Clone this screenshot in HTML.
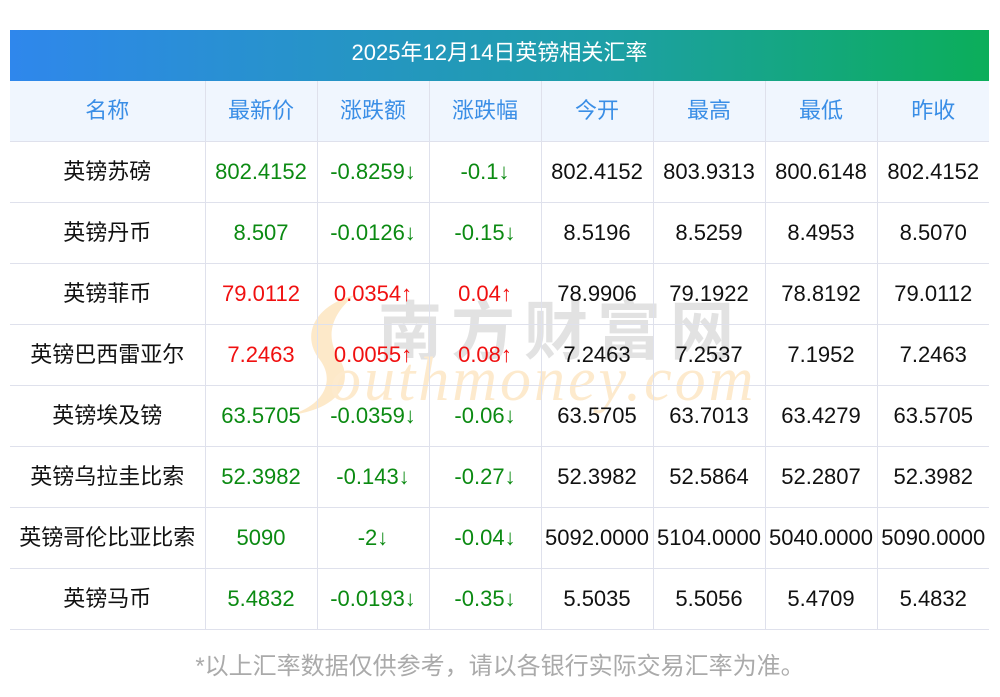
<!DOCTYPE html>
<html><head><meta charset="utf-8"><style>
body{margin:0;width:1000px;height:697px;background:#fff;font-family:"Liberation Sans","Noto Sans CJK SC",sans-serif;position:relative;overflow:hidden}
.title{position:absolute;left:10px;top:30px;width:979px;height:51px;background:linear-gradient(90deg,#2f87ec,#1e9fa8 60%,#0bae5a);color:#fff;font-size:22px;line-height:46px;text-align:center}
table{position:absolute;left:10px;top:81px;border-collapse:collapse;width:979px;table-layout:fixed}
td,th{height:60px;border:1px solid #dfe1ec;text-align:center;font-size:22px;font-weight:normal;padding:0;white-space:nowrap;color:#111}
tr:first-child td,tr:first-child th{border-top:none}
td:first-child,th:first-child{border-left:none;padding-bottom:5px;height:55px}
td:last-child,th:last-child{border-right:none}
th{background:#f0f6fe;color:#3a8ee6;padding-bottom:5px!important;height:55px!important}
.g{color:#0b8a12}.r{color:#f01010}
.wm{position:absolute;pointer-events:none}
.foot{position:absolute;top:646px;left:0;width:1000px;text-align:center;color:#aaa;font-size:24px}
</style></head><body>
<div class="title">2025年12月14日英镑相关汇率</div>
<svg class="wm" style="left:280px;top:290px" width="100" height="130"><path d="M75 5 C35 15 20 45 40 70 C55 90 45 115 10 125 C55 120 75 95 60 70 C45 48 50 25 75 5Z" fill="#fde9c9"/></svg>
<div class="wm" style="left:378px;top:292px;font-size:64px;font-weight:bold;color:#e2e2e2;letter-spacing:9px;font-family:'Noto Sans CJK SC',sans-serif;line-height:70px">南方财富网</div>
<div class="wm" style="left:330px;top:345px;font-size:62px;font-style:italic;color:#fdeacd;font-family:'Liberation Serif',serif;letter-spacing:3px;line-height:70px">outhmoney.com</div>
<table>
<colgroup><col style="width:195px"><col style="width:112px"><col style="width:112px"><col style="width:112px"><col style="width:112px"><col style="width:112px"><col style="width:112px"><col style="width:112px"></colgroup>
<tr><th>名称</th><th>最新价</th><th>涨跌额</th><th>涨跌幅</th><th>今开</th><th>最高</th><th>最低</th><th>昨收</th></tr>
<tr><td>英镑苏磅</td><td class="g">802.4152</td><td class="g">-0.8259↓</td><td class="g">-0.1↓</td><td>802.4152</td><td>803.9313</td><td>800.6148</td><td>802.4152</td></tr>
<tr><td>英镑丹币</td><td class="g">8.507</td><td class="g">-0.0126↓</td><td class="g">-0.15↓</td><td>8.5196</td><td>8.5259</td><td>8.4953</td><td>8.5070</td></tr>
<tr><td>英镑菲币</td><td class="r">79.0112</td><td class="r">0.0354↑</td><td class="r">0.04↑</td><td>78.9906</td><td>79.1922</td><td>78.8192</td><td>79.0112</td></tr>
<tr><td>英镑巴西雷亚尔</td><td class="r">7.2463</td><td class="r">0.0055↑</td><td class="r">0.08↑</td><td>7.2463</td><td>7.2537</td><td>7.1952</td><td>7.2463</td></tr>
<tr><td>英镑埃及镑</td><td class="g">63.5705</td><td class="g">-0.0359↓</td><td class="g">-0.06↓</td><td>63.5705</td><td>63.7013</td><td>63.4279</td><td>63.5705</td></tr>
<tr><td>英镑乌拉圭比索</td><td class="g">52.3982</td><td class="g">-0.143↓</td><td class="g">-0.27↓</td><td>52.3982</td><td>52.5864</td><td>52.2807</td><td>52.3982</td></tr>
<tr><td>英镑哥伦比亚比索</td><td class="g">5090</td><td class="g">-2↓</td><td class="g">-0.04↓</td><td>5092.0000</td><td>5104.0000</td><td>5040.0000</td><td>5090.0000</td></tr>
<tr><td>英镑马币</td><td class="g">5.4832</td><td class="g">-0.0193↓</td><td class="g">-0.35↓</td><td>5.5035</td><td>5.5056</td><td>5.4709</td><td>5.4832</td></tr>
</table>
<div class="foot">*以上汇率数据仅供参考，请以各银行实际交易汇率为准。</div>
</body></html>
